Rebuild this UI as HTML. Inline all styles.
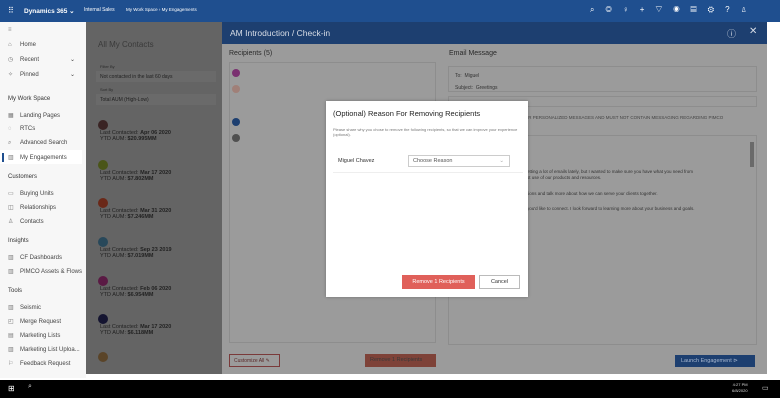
<!DOCTYPE html>
<html><head><style>
*{box-sizing:border-box;margin:0;padding:0}
body{width:780px;height:400px;overflow:hidden;background:#fff;font-family:"Liberation Sans",sans-serif;position:relative;font-size:6px;color:#333}
.a{position:absolute}
.top{left:0;top:0;width:780px;height:22px;background:#1f4f8f;color:#fff}
.side{left:0;top:22px;width:86px;height:356px;background:#f7f7f7}
.side div{position:absolute;left:8px;font-size:6px;color:#444;white-space:nowrap}
.side .h{left:8px;color:#333;font-size:6px}
.ic{display:inline-block;width:8px;color:#777;margin-right:4px}
.gray{left:86px;top:22px;width:136px;height:352px;background-color:#646464}
.panel{left:222px;top:22px;width:545px;height:352px;background:#9b9b9b}
.ph{left:222px;top:22px;width:545px;height:22px;background:#1d3f70;color:#d8dde6;font-size:8.5px}
.task{left:0;top:380px;width:780px;height:18px;background:#000}
.dlg{left:326px;top:101px;width:202px;height:196px;background:#fff;box-shadow:0 0 3px rgba(0,0,0,.3)}
.ct{color:#222;font-size:5.5px}
.av{width:10px;height:10px;border-radius:50%}
</style></head><body>
<div class="a top">
 <div class="a" style="left:8px;top:6px;font-size:8px">⠿</div>
 <div class="a" style="left:24px;top:7px;font-size:6.5px;font-weight:bold">Dynamics 365 ⌄</div>
 <div class="a" style="left:84px;top:7px;font-size:5px">Internal Sales</div>
 <div class="a" style="left:126px;top:7px;font-size:4.5px">My Work Space ›  My Engagements</div>
 <div class="a" style="left:590px;top:5px;font-size:8px;letter-spacing:11px;white-space:nowrap">⌕◎♀+▽◉▤⚙?♙</div>
</div>
<div class="a side">
 <div style="top:5px;color:#888">≡</div>
 <div style="top:20px"><span class="ic">⌂</span>Home</div>
 <div style="top:34px"><span class="ic">◷</span>Recent<span style="position:absolute;left:62px">⌄</span></div>
 <div style="top:49px"><span class="ic">✧</span>Pinned<span style="position:absolute;left:62px">⌄</span></div>
 <div class="h" style="top:74px">My Work Space</div>
 <div style="top:90px"><span class="ic">▦</span>Landing Pages</div>
 <div style="top:104px"><span class="ic">◌</span>RTCs</div>
 <div style="top:118px"><span class="ic">⌕</span>Advanced Search</div>
 <div style="top:128px;left:0;width:82px;height:14px;background:#fff"></div>
 <div style="top:131px;left:2px;width:2px;height:9px;background:#1f4f8f"></div>
 <div style="top:132px"><span class="ic">▥</span>My Engagements</div>
 <div class="h" style="top:152px">Customers</div>
 <div style="top:168px"><span class="ic">▭</span>Buying Units</div>
 <div style="top:182px"><span class="ic">◫</span>Relationships</div>
 <div style="top:196px"><span class="ic">♙</span>Contacts</div>
 <div class="h" style="top:216px">Insights</div>
 <div style="top:232px"><span class="ic">▥</span>CF Dashboards</div>
 <div style="top:246px"><span class="ic">▥</span>PIMCO Assets &amp; Flows</div>
 <div class="h" style="top:266px">Tools</div>
 <div style="top:282px"><span class="ic">▥</span>Seismic</div>
 <div style="top:296px"><span class="ic">◰</span>Merge Request</div>
 <div style="top:310px"><span class="ic">▤</span>Marketing Lists</div>
 <div style="top:324px"><span class="ic">▥</span>Marketing List Uploa...</div>
 <div style="top:338px"><span class="ic">⚐</span>Feedback Request</div>
</div>
<div class="a gray">
 <div class="a" style="left:12px;top:18px;font-size:8px;color:#3a3a3a">All My Contacts</div>
 <div class="a" style="left:14px;top:42px;font-size:4px;color:#2a2a2a">Filter By</div>
 <div class="a" style="left:10px;top:49px;width:120px;height:11px;background:#6a6a6a;font-size:5px;color:#222;padding:3px 4px">Not contacted in the last 60 days</div>
 <div class="a" style="left:14px;top:65px;font-size:4px;color:#2a2a2a">Sort By</div>
 <div class="a" style="left:10px;top:72px;width:120px;height:11px;background:#6a6a6a;font-size:5px;color:#222;padding:3px 4px">Total AUM (High-Low)</div>
 <div class="a av" style="left:12px;top:98px;background:#3a2424"></div>
 <div class="a ct" style="left:14px;top:108px">Last Contacted: <b>Apr 06 2020</b><br>YTD AUM: <b>$20.995MM</b></div>
 <div class="a av" style="left:12px;top:138px;background:#4a5518"></div>
 <div class="a ct" style="left:14px;top:148px">Last Contacted: <b>Mar 17 2020</b><br>YTD AUM: <b>$7.802MM</b></div>
 <div class="a av" style="left:12px;top:176px;background:#6a2818"></div>
 <div class="a ct" style="left:14px;top:186px">Last Contacted: <b>Mar 31 2020</b><br>YTD AUM: <b>$7.246MM</b></div>
 <div class="a av" style="left:12px;top:215px;background:#28485a"></div>
 <div class="a ct" style="left:14px;top:225px">Last Contacted: <b>Sep 23 2019</b><br>YTD AUM: <b>$7.019MM</b></div>
 <div class="a av" style="left:12px;top:254px;background:#5a1a44"></div>
 <div class="a ct" style="left:14px;top:264px">Last Contacted: <b>Feb 06 2020</b><br>YTD AUM: <b>$6.954MM</b></div>
 <div class="a av" style="left:12px;top:292px;background:#141430"></div>
 <div class="a ct" style="left:14px;top:302px">Last Contacted: <b>Mar 17 2020</b><br>YTD AUM: <b>$6.118MM</b></div>
 <div class="a av" style="left:12px;top:330px;background:#5a4428"></div>
</div>
<div class="a panel">
 <div class="a" style="left:7px;top:28px;font-size:7px;color:#2a2a2a">Recipients (5)</div>
 <div class="a" style="left:7px;top:40px;width:207px;height:281px;border:1px solid #8d8d8d"></div>
 <div class="a" style="left:10px;top:47px;width:8px;height:8px;border-radius:50%;background:#7a3070"></div>
 <div class="a" style="left:10px;top:63px;width:8px;height:8px;border-radius:50%;background:#a08078"></div>
 <div class="a" style="left:10px;top:96px;width:8px;height:8px;border-radius:50%;background:#1d3f70"></div>
 <div class="a" style="left:10px;top:112px;width:8px;height:8px;border-radius:50%;background:#505050"></div>
 <div class="a" style="left:7px;top:332px;width:51px;height:13px;border:1px solid #7a3a3a;color:#5a2a2a;font-size:5px;padding:3px 4px">Customize All ✎</div>
 <div class="a" style="left:143px;top:332px;width:71px;height:13px;background:#7e4238;color:#3a3a3a;font-size:5.5px;padding:3px 5px">Remove 1 Recipients</div>
 <div class="a" style="left:227px;top:28px;font-size:7px;color:#2a2a2a">Email Message</div>
 <div class="a" style="left:226px;top:44px;width:309px;height:26px;border:1px solid #8d8d8d;font-size:5px;color:#333;padding:3px 6px;line-height:12px">To: &nbsp;Miguel<br>Subject: &nbsp;Greetings</div>
 <div class="a" style="left:226px;top:74px;width:309px;height:11px;border:1px solid #8d8d8d"></div>
 <div class="a" style="left:300px;top:93px;font-size:4.5px;color:#444">FOR PERSONALIZED MESSAGES AND MUST NOT CONTAIN MESSAGING REGARDING PIMCO</div>
 <div class="a" style="left:226px;top:113px;width:309px;height:210px;border:1px solid #8d8d8d"></div>
 <div class="a" style="left:528px;top:120px;width:4px;height:25px;background:#6a6a6a"></div>
 <div class="a" style="left:305px;top:147px;font-size:4.5px;color:#333;line-height:6px">etting a lot of emails lately, but I wanted to make sure you have what you need from<br>st use of our products and resources.</div>
 <div class="a" style="left:305px;top:169px;font-size:4.5px;color:#333">tions and talk more about how we can serve your clients together.</div>
 <div class="a" style="left:305px;top:184px;font-size:4.5px;color:#333">you'd like to connect. I look forward to learning more about your business and goals.</div>
 <div class="a" style="left:453px;top:333px;width:80px;height:12px;background:#1d3f70;color:#a8b8d0;font-size:5.5px;padding:3px 6px">Launch Engagement ⊳</div>
</div>
<div class="a ph">
 <div class="a" style="left:8px;top:6px">AM Introduction / Check-in</div>
 <div class="a" style="left:505px;top:5px;font-size:9px">ⓘ</div>
 <div class="a" style="left:527px;top:4px;font-size:10px">✕</div>
</div>
<div class="a dlg">
 <div class="a" style="left:7px;top:8px;font-size:7.5px;color:#222">(Optional) Reason For Removing Recipients</div>
 <div class="a" style="left:7px;top:26px;font-size:4px;color:#777;line-height:5px;width:190px">Please share why you chose to remove the following recipients, so that we can improve your experience (optional).</div>
 <div class="a" style="left:12px;top:57px;font-size:5.5px;color:#333">Miguel Chavez</div>
 <div class="a" style="left:82px;top:54px;width:102px;height:12px;border:1px solid #ccc;font-size:5.5px;color:#555;padding:2px 4px">Choose Reason<span style="position:absolute;right:5px;color:#aaa">⌄</span></div>
 <div class="a" style="left:7px;top:71px;width:190px;height:1px;background:#eee"></div>
 <div class="a" style="left:76px;top:174px;width:73px;height:14px;background:#e0605a;color:#fff;font-size:5.5px;text-align:center;line-height:14px">Remove 1 Recipients</div>
 <div class="a" style="left:153px;top:174px;width:41px;height:14px;border:1px solid #bbb;color:#333;font-size:5.5px;text-align:center;line-height:12px">Cancel</div>
</div>
<div class="a task">
 <div class="a" style="left:8px;top:4px;font-size:8px;color:#fff">⊞</div>
 <div class="a" style="left:28px;top:3px;font-size:7px;color:#ddd">⌕</div>
 <div class="a" style="left:732px;top:2px;font-size:4px;color:#ddd;text-align:right;line-height:6px">4:27 PM<br>6/8/2020</div>
 <div class="a" style="left:762px;top:4px;font-size:7px;color:#ddd">▭</div>
</div>
</body></html>
